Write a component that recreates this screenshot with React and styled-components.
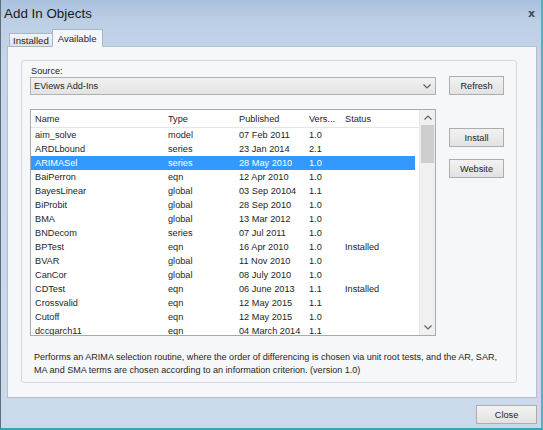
import React from "react";
import styled, { createGlobalStyle } from "styled-components";

const Global = createGlobalStyle`
  html, body { margin: 0; padding: 0; background: #cad9ea; }
  body { font-family: "Liberation Sans", Arial, sans-serif; }
  * { box-sizing: border-box; }
`;

const UI = `"Liberation Sans", Arial, sans-serif`;

const Window = styled.div`
  width: 543px;
  height: 430px;
  display: flex;
  flex-direction: column;
  background: linear-gradient(#a9c1dd 0px, #bccfe5 22px, #c6d6e9 60px, #cbdaeb 100%);
  border-left: 1px solid #5f6d7c;
  border-right: 2px solid #5aaec0;
  border-bottom: 2px solid #38a3b6;
  font-family: ${UI};
  font-size: 9.2px;
  color: #1e1e1e;
  overflow: hidden;
`;

const TitleBar = styled.div`
  height: 28px;
  flex: none;
  display: flex;
  align-items: center;
  justify-content: space-between;
  padding: 0 6px 2px 3px;
`;

const Title = styled.div`
  font-family: "Liberation Sans", Arial, sans-serif;
  font-size: 13.4px;
  color: #1a1a1a;
`;

const CloseX = styled.div`
  font-family: "DejaVu Sans", sans-serif;
  font-size: 11px;
  font-weight: bold;
  color: #3b4b66;
`;

const TabStrip = styled.div`
  display: flex;
  align-items: flex-end;
  height: 18px;
  padding-left: 8px;
  flex: none;
  position: relative;
  z-index: 1;
`;

const Tab = styled.div`
  height: ${(p) => (p.$active ? 18 : 14)}px;
  padding: 0 ${(p) => (p.$active ? 5 : 3)}px;
  display: flex;
  align-items: center;
  justify-content: center;
  border: 1px solid #a9b6c6;
  border-bottom: ${(p) => (p.$active ? "1px solid #f5f7fa" : "1px solid #a9b6c6")};
  background: ${(p) => (p.$active ? "#f5f7fa" : "linear-gradient(#f3f4f6, #dfe3e8)")};
  margin-left: ${(p) => (p.$active ? -1 : 0)}px;
  margin-bottom: -1px;
  color: #1e1e1e;
  font-size: 9.6px;
`;

const TabPanel = styled.div`
  margin: 0 4px 0 6px;
  height: 352px;
  flex: none;
  background: #f5f7fa;
  border: 1px solid #b3bfcd;
  padding: 13px 22px 14px 13px;
  display: flex;
`;

const Group = styled.div`
  flex: 1;
  border: 1px solid #d4d9df;
  border-radius: 3px;
  background: #f6f7f9;
  padding: 5px 12px 0 8px;
  display: flex;
  flex-direction: column;
`;

const Row = styled.div`
  display: flex;
  align-items: ${(p) => p.$align || "flex-start"};
  gap: 13px;
`;

const LeftCol = styled.div`
  width: 406px;
  flex: none;
  display: flex;
  flex-direction: column;
`;

const Label = styled.div`
  line-height: 11px;
  padding-left: 1px;
`;

const Combo = styled.div`
  height: 18px;
  border: 1px solid #b1b1b1;
  background: linear-gradient(#f1f1f1, #e3e3e3);
  display: flex;
  align-items: center;
  justify-content: space-between;
  padding: 0 4px 0 3px;
`;

const Button = styled.div`
  width: 55px;
  height: 19px;
  flex: none;
  border: 1px solid #adadad;
  background: linear-gradient(#f2f2f2, #e2e2e2);
  display: flex;
  align-items: center;
  justify-content: center;
  color: #1e1e1e;
`;

const ButtonCol = styled.div`
  display: flex;
  flex-direction: column;
  gap: 12px;
  padding-top: 33px;
`;

const ListBox = styled.div`
  width: 406px;
  height: 227px;
  margin-top: 14px;
  border: 1px solid #a7abb0;
  background: #ffffff;
  display: flex;
  overflow: hidden;
`;

const ListMain = styled.div`
  flex: 1;
  display: flex;
  flex-direction: column;
  overflow: hidden;
`;

const cols = "133px 71px 70px 36px 1fr";

const HeaderRow = styled.div`
  display: grid;
  grid-template-columns: ${cols};
  height: 18px;
  align-items: center;
  padding-left: 4px;
  border-bottom: 1px solid #e3e5e8;
  color: #1e1e1e;
  flex: none;
`;

const DataRow = styled.div`
  display: grid;
  grid-template-columns: ${cols};
  height: 14px;
  align-items: center;
  padding-left: 4px;
  margin: 0 4px 0 0;
  background: ${(p) => (p.$sel ? "#3399ff" : "transparent")};
  color: ${(p) => (p.$sel ? "#ffffff" : "#1e1e1e")};
  flex: none;
  white-space: nowrap;
`;

const ScrollBar = styled.div`
  width: 16px;
  flex: none;
  background: #f0f0f0;
  display: flex;
  flex-direction: column;
  align-items: center;
  border-left: 1px solid #e8e8e8;
`;

const Arrow = styled.div`
  height: 15px;
  width: 100%;
  display: flex;
  align-items: center;
  justify-content: center;
  flex: none;
`;

const Thumb = styled.div`
  width: 13px;
  height: 38px;
  background: #cdcdcd;
  flex: none;
`;

const Spacer = styled.div`
  flex: 1;
`;

const Description = styled.div`
  margin: 15px 0 0 4px;
  line-height: 12.5px;
  font-size: 9.05px;
  color: #1e1e1e;
  white-space: nowrap;
`;

const Footer = styled.div`
  flex: 1;
  display: flex;
  justify-content: flex-end;
  align-items: flex-start;
  padding: 7px 4px 0 0;
`;

const CloseButton = styled(Button)`
  width: 61px;
  height: 19px;
`;

const Chevron = ({ up }) => (
  <svg width="8" height="5" viewBox="0 0 8 5">
    <path
      d={up ? "M0.5 4.5 L4 1 L7.5 4.5" : "M0.5 0.5 L4 4 L7.5 0.5"}
      fill="none"
      stroke="#606060"
      strokeWidth="1.2"
    />
  </svg>
);

const rows = [
  ["aim_solve", "model", "07 Feb 2011", "1.0", ""],
  ["ARDLbound", "series", "23 Jan 2014", "2.1", ""],
  ["ARIMASel", "series", "28 May 2010", "1.0", ""],
  ["BaiPerron", "eqn", "12 Apr 2010", "1.0", ""],
  ["BayesLinear", "global", "03 Sep 20104", "1.1", ""],
  ["BiProbit", "global", "28 Sep 2010", "1.0", ""],
  ["BMA", "global", "13 Mar 2012", "1.0", ""],
  ["BNDecom", "series", "07 Jul 2011", "1.0", ""],
  ["BPTest", "eqn", "16 Apr 2010", "1.0", "Installed"],
  ["BVAR", "global", "11 Nov 2010", "1.0", ""],
  ["CanCor", "global", "08 July 2010", "1.0", ""],
  ["CDTest", "eqn", "06 June 2013", "1.1", "Installed"],
  ["Crossvalid", "eqn", "12 May 2015", "1.1", ""],
  ["Cutoff", "eqn", "12 May 2015", "1.0", ""],
  ["dccgarch11", "eqn", "04 March 2014", "1.1", ""],
];

export default function App() {
  return (
    <>
      <Global />
      <Window>
        <TitleBar>
          <Title>Add In Objects</Title>
          <CloseX>x</CloseX>
        </TitleBar>
        <TabStrip>
          <Tab>Installed</Tab>
          <Tab $active>Available</Tab>
        </TabStrip>
        <TabPanel>
          <Group>
            <Row $align="flex-end">
              <LeftCol>
                <Label>Source:</Label>
                <Combo>
                  <span>EViews Add-Ins</span>
                  <Chevron />
                </Combo>
              </LeftCol>
              <Button>Refresh</Button>
            </Row>
            <Row>
              <ListBox>
                <ListMain>
                  <HeaderRow>
                    <span>Name</span>
                    <span>Type</span>
                    <span>Published</span>
                    <span>Vers...</span>
                    <span>Status</span>
                  </HeaderRow>
                  {rows.map((r, i) => (
                    <DataRow key={r[0]} $sel={i === 2}>
                      {r.map((c, j) => (
                        <span key={j}>{c}</span>
                      ))}
                    </DataRow>
                  ))}
                </ListMain>
                <ScrollBar>
                  <Arrow>
                    <Chevron up />
                  </Arrow>
                  <Thumb />
                  <Spacer />
                  <Arrow>
                    <Chevron />
                  </Arrow>
                </ScrollBar>
              </ListBox>
              <ButtonCol>
                <Button>Install</Button>
                <Button>Website</Button>
              </ButtonCol>
            </Row>
            <Description>
              Performs an ARIMA selection routine, where the order of differencing is chosen via unit root tests, and the AR, SAR,
              <br />
              MA and SMA terms are chosen according to an information criterion. (version 1.0)
            </Description>
          </Group>
        </TabPanel>
        <Footer>
          <CloseButton>Close</CloseButton>
        </Footer>
      </Window>
    </>
  );
}
